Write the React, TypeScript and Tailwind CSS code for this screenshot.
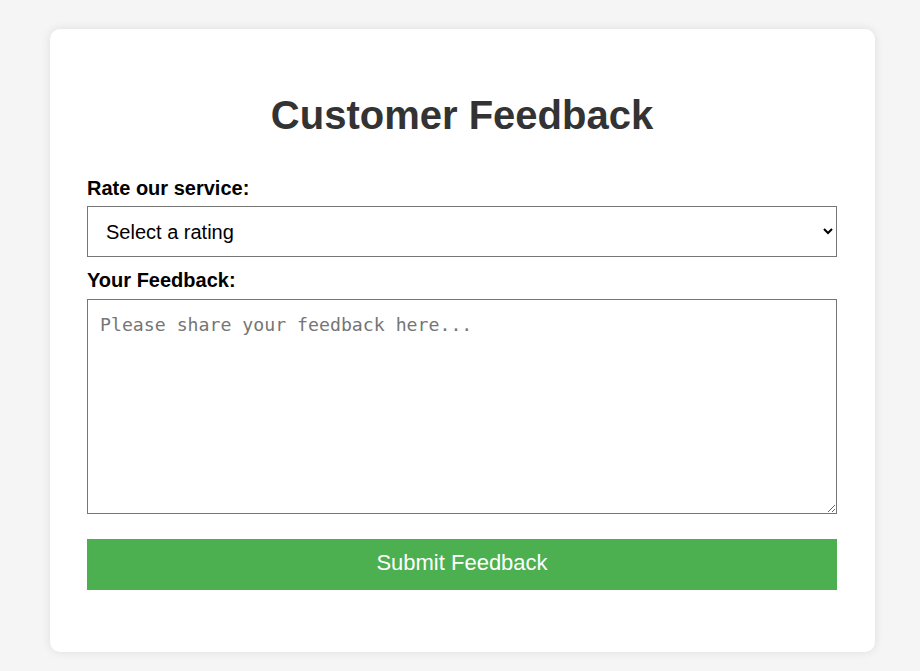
import React from 'react';

const App: React.FC = () => {
  return (
    <div className="min-h-screen bg-[#f5f5f5] pt-[29px] font-['Liberation_Sans',Arial,sans-serif]">
      <div className="ml-[50px] w-[825px] rounded-[10px] bg-white pl-[37px] pr-[38px] pt-[63px] pb-[62px] shadow-[0_0_10px_rgba(0,0,0,0.1)]">
        <h1 className="text-center text-[40px] font-bold leading-[46px] text-[#333]">Customer Feedback</h1>
        <form className="mt-[39px] flex flex-col" onSubmit={(e) => e.preventDefault()}>
          <label htmlFor="rating" className="mb-[7px] text-[20px] font-bold leading-[22px] text-black">
            Rate our service:
          </label>
          <select
            id="rating"
            defaultValue=""
            className="h-[51px] w-full border border-[#767676] bg-white pl-[14px] pr-[10px] text-[20px] text-black"
          >
            <option value="">Select a rating</option>
            <option value="5">Excellent</option>
            <option value="4">Good</option>
            <option value="3">Average</option>
            <option value="2">Poor</option>
            <option value="1">Terrible</option>
          </select>
          <label htmlFor="feedback" className="mt-[12px] mb-[8px] text-[20px] font-bold leading-[22px] text-black">
            Your Feedback:
          </label>
          <textarea
            id="feedback"
            placeholder="Please share your feedback here..."
            className="h-[215px] w-full border border-[#767676] px-[12px] pt-[14px] pb-[12px] font-['DejaVu_Sans_Mono',monospace] text-[18.2px] leading-[21px] text-black placeholder:text-[#757575]"
          />
          <button
            type="submit"
            className="mt-[25px] h-[51px] w-full bg-[#4caf50] pb-[4px] text-[22px] text-white"
          >
            Submit Feedback
          </button>
        </form>
      </div>
    </div>
  );
};

export default App;
